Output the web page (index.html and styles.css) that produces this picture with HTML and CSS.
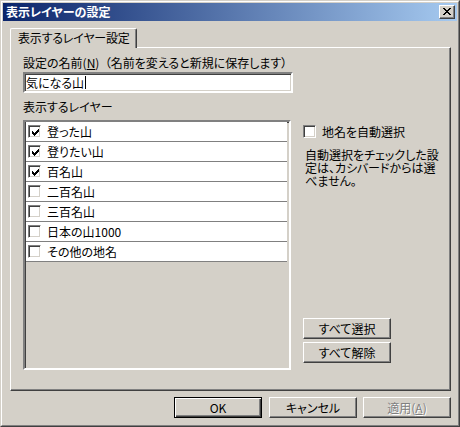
FILE: index.html
```html
<!DOCTYPE html>
<html lang="ja">
<head>
    <meta charset="UTF-8">
    <meta name="viewport" content="width=device-width, initial-scale=1.0">
    <title>表示レイヤーの設定</title>
    <link rel="stylesheet" href="styles.css">
</head>
<body>
    <div class="window">
        <div class="frame">
            <div class="titlebar">
                <span class="title">表示レイヤーの設定</span>
                <button class="close">
                    <svg width="8" height="7" viewBox="0 0 8 7" shape-rendering="crispEdges">
                        <path d="M0 0h2v1h-2zM6 0h2v1h-2zM1 1h2v1h-2zM5 1h2v1h-2zM2 2h4v1h-4zM3 3h2v1h-2zM2 4h4v1h-4zM1 5h2v1h-2zM5 5h2v1h-2zM0 6h2v1h-2zM6 6h2v1h-2z" fill="#000"/>
                    </svg>
                </button>
            </div>
            <div class="body">
                <div class="tabs">
                    <div class="tab">表示するレイヤー設定</div>
                </div>
                <div class="panel">
                    <div class="col_left">
                        <div class="label">設定の名前(<u>N</u>)&nbsp; （名前を変えると新規に保存します）</div>
                        <div class="input">気になる山<span class="caret"></span></div>
                        <div class="label label_list">表示するレイヤー</div>
                        <div class="list">
                            <div class="row"><span class="cb on"></span>登った山</div>
                            <div class="row"><span class="cb on"></span>登りたい山</div>
                            <div class="row"><span class="cb on"></span>百名山</div>
                            <div class="row"><span class="cb"></span>二百名山</div>
                            <div class="row"><span class="cb"></span>三百名山</div>
                            <div class="row"><span class="cb"></span>日本の山1000</div>
                            <div class="row"><span class="cb"></span>その他の地名</div>
                        </div>
                    </div>
                    <div class="col_right">
                        <div class="check_row"><span class="cb"></span>地名を自動選択</div>
                        <p class="note">自動選択をチェックした設<br>定は、カシバードからは選<br>べません。</p>
                        <button class="btn btn_first">すべて選択</button>
                        <button class="btn">すべて解除</button>
                    </div>
                </div>
                <div class="footer">
                    <button class="btn default">OK</button>
                    <button class="btn">キャンセル</button>
                    <button class="btn disabled">適用(<u>A</u>)</button>
                </div>
            </div>
        </div>
    </div>
</body>
</html>
```

FILE: styles.css
```css
*{
    box-sizing: border-box;
}
body{
    margin: 0;
    font-family: "Noto Sans CJK JP", sans-serif;
    font-size: 12px;
    font-feature-settings: "palt";
    color: #000;
}
.window{
    width: 460px;
    height: 427px;
    border: 1px solid;
    border-color: #d4d0c8 #404040 #404040 #d4d0c8;
    background-color: #d4d0c8;
}
.frame{
    height: 100%;
    border: 1px solid;
    border-color: #fff #808080 #808080 #fff;
    padding: 1px;
    display: flex;
    flex-direction: column;
}
.titlebar{
    height: 18px;
    display: flex;
    align-items: center;
    background: linear-gradient(to right, #0a246a, #a6caf0);
    padding-left: 3px;
    padding-right: 2px;
}
.title{
    color: #fff;
    font-weight: bold;
    line-height: 14px;
    flex: 1;
}
.close{
    width: 16px;
    height: 14px;
    padding: 0;
    margin: 0;
    border: 1px solid;
    border-color: #fff #404040 #404040 #fff;
    box-shadow: inset -1px -1px #808080;
    background-color: #d4d0c8;
    display: flex;
    align-items: center;
    justify-content: center;
}
.close>svg{
    display: block;
    margin-left: -1px;
    margin-top: -1px;
}
.body{
    flex: 1;
    padding: 7px 6px 0 7px;
}
.tabs{
    display: flex;
    height: 19px;
}
.tab{
    position: relative;
    z-index: 1;
    height: 20px;
    padding: 0 6px 0 7px;
    line-height: 17px;
    letter-spacing: -0.2px;
    white-space: nowrap;
    background-color: #d4d0c8;
    border-top: 1px solid #fff;
    border-left: 1px solid #fff;
    border-right: 1px solid #404040;
    border-top-left-radius: 2px;
    border-top-right-radius: 2px;
    box-shadow: inset -1px 0 #808080;
}
.panel{
    height: 344px;
    border: 1px solid;
    border-color: #fff #404040 #404040 #fff;
    box-shadow: inset -1px -1px #808080;
    padding: 8px 0 0 12px;
    display: flex;
}
.col_left{
    width: 270px;
    height: 314px;
    flex: none;
    display: flex;
    flex-direction: column;
}
.label{
    height: 14px;
    line-height: 14px;
    white-space: nowrap;
}
.input{
    margin-top: 2px;
    height: 21px;
    width: 270px;
    border: 2px solid;
    border-color: #808080 #fff #fff #808080;
    box-shadow: inset 1px 1px #404040, inset -1px -1px #d4d0c8;
    background-color: #fff;
    padding-left: 1px;
    line-height: 17px;
    display: flex;
    align-items: center;
}
.caret{
    display: inline-block;
    width: 1px;
    height: 13px;
    background-color: #000;
    margin-left: 1px;
}
.label_list{
    margin-top: 7px;
}
.list{
    margin-top: 6px;
    width: 268px;
    height: 250px;
    border: 2px solid;
    border-color: #808080 #fff #fff #808080;
    box-shadow: inset 1px 1px #404040, inset -1px -1px #d4d0c8;
    background-color: #d4d0c8;
    padding: 0 2px 0 1px;
}
.row{
    height: 20px;
    background-color: #fff;
    border-bottom: 1px solid #808080;
    display: flex;
    align-items: center;
    padding-left: 2px;
}
.cb{
    width: 13px;
    height: 13px;
    flex: none;
    border: 1px solid;
    border-color: #808080 #fff #fff #808080;
    box-shadow: inset 1px 1px #404040, inset -1px -1px #d4d0c8;
    background-color: #fff;
    margin-right: 6px;
    background-repeat: no-repeat;
    background-position: 2px 2px;
}
.cb.on{
    background-image: url("data:image/svg+xml,%3Csvg xmlns='http://www.w3.org/2000/svg' width='9' height='9' shape-rendering='crispEdges'%3E%3Cpath d='M1 3h1v3h-1zM2 4h1v3h-1zM3 5h1v3h-1zM4 4h1v3h-1zM5 3h1v3h-1zM6 2h1v3h-1zM7 1h1v3h-1z' fill='%23000'/%3E%3C/svg%3E");
}
.col_right{
    margin-left: 10px;
    height: 314px;
    flex: 1;
    display: flex;
    flex-direction: column;
    align-items: flex-start;
    padding-bottom: 7px;
}
.check_row{
    margin-top: 66px;
    height: 19px;
    display: flex;
    align-items: center;
}
.note{
    margin: 7px 0 0 2px;
    line-height: 13px;
    white-space: nowrap;
}
.btn{
    width: 88px;
    height: 21px;
    padding: 0;
    margin: 0;
    font-family: inherit;
    font-size: 12px;
    font-feature-settings: "palt";
    color: #000;
    background-color: #d4d0c8;
    border: 1px solid;
    border-color: #fff #404040 #404040 #fff;
    box-shadow: inset -1px -1px #808080;
}
.btn_first{
    margin-top: auto;
    margin-bottom: 3px;
}
.footer{
    margin-top: 6px;
    display: flex;
    justify-content: flex-end;
    gap: 6px;
}
.btn.default{
    border: 1px solid #000;
    box-shadow: inset 1px 1px #fff, inset -1px -1px #404040, inset -2px -2px #808080;
    margin-right: 1px;
}
.btn.disabled{
    color: #808080;
    text-shadow: 1px 1px #fff;
}
```
